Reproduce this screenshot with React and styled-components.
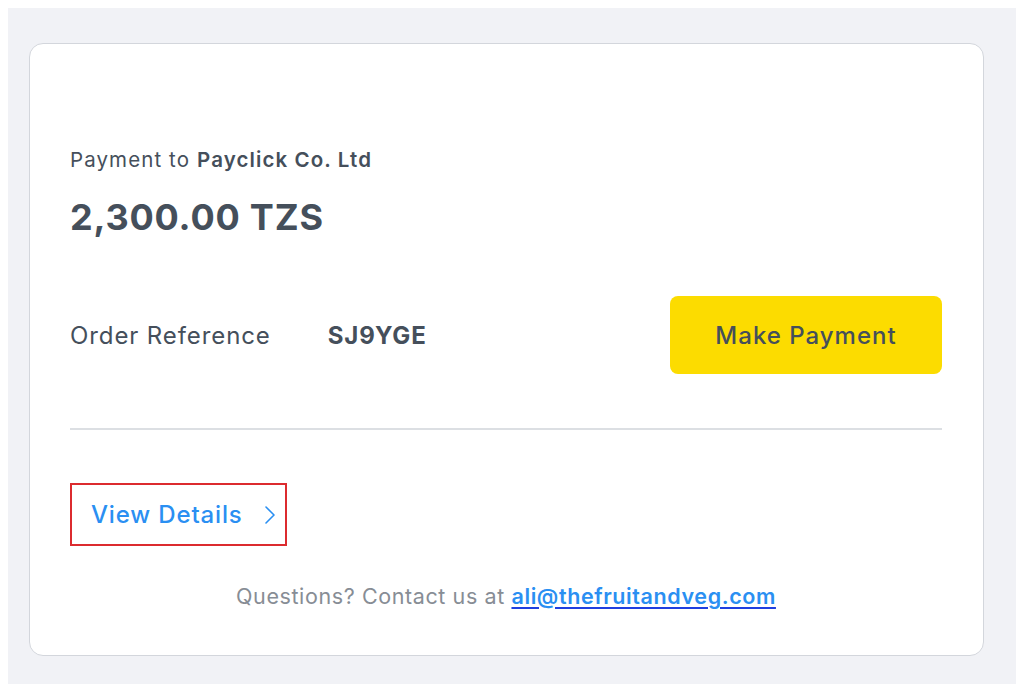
import React from "react";
import styled, { createGlobalStyle } from "styled-components";

const Global = createGlobalStyle`
  html, body { margin: 0; padding: 0; background: #ffffff; }
  body { margin: 8px; font-family: Inter, "Noto Sans", sans-serif; }
  * { box-sizing: border-box; }
`;

const Backdrop = styled.div`
  width: 1008px;
  height: 676px;
  background: #f1f2f6;
  padding: 35px 32px 28px 21px;
  display: flex;
`;

const Card = styled.div`
  flex: 1;
  background: #ffffff;
  border: 1px solid #d3d6dc;
  border-radius: 14px;
  padding: 104px 41px 0 40px;
  display: flex;
  flex-direction: column;
  color: #454f5b;
`;

const PayeeLine = styled.div`
  font-size: 20.5px;
  line-height: 24px;
  font-weight: 400;
  letter-spacing: 1.1px;
  b { font-weight: 600; }
`;

const Amount = styled.div`
  margin-top: 23px;
  font-size: 36px;
  line-height: 44px;
  font-weight: 700;
  letter-spacing: 0.8px;
`;

const Row = styled.div`
  margin-top: 57px;
  display: flex;
  align-items: center;
  justify-content: space-between;
`;

const RefGroup = styled.div`
  display: flex;
  align-items: center;
  gap: 57px;
  font-size: 24px;
  letter-spacing: 0.9px;
`;

const RefLabel = styled.span`
  font-weight: 400;
`;

const RefValue = styled.span`
  font-weight: 700;
`;

const PayButton = styled.button`
  width: 272px;
  height: 78px;
  border: none;
  border-radius: 8px;
  background: #fcdc00;
  color: #454f5b;
  font-family: inherit;
  font-size: 24px;
  font-weight: 500;
  letter-spacing: 1px;
  cursor: pointer;
`;

const Divider = styled.hr`
  margin: 54px 0 0;
  border: none;
  height: 2px;
  background: #dcdfe3;
`;

const DetailsLink = styled.a`
  margin-top: 53px;
  align-self: flex-start;
  width: 217px;
  height: 63px;
  border: 2px solid #dc2b2f;
  display: flex;
  align-items: center;
  padding-left: 19px;
  gap: 21px;
  color: #2a8ff2;
  font-size: 24px;
  font-weight: 500;
  letter-spacing: 0.85px;
  text-decoration: none;
`;

const Footer = styled.p`
  margin: 37px 0 0;
  text-align: center;
  font-size: 21.5px;
  line-height: 26px;
  color: #878d95;
  letter-spacing: 0.6px;
`;

const Email = styled.a`
  color: #2a8ff2;
  font-weight: 600;
  text-decoration: underline;
  text-decoration-color: #1f3fe0;
  text-underline-offset: 3px;
`;

const Chevron = () => (
  <svg width="12" height="20" viewBox="0 0 12 20" fill="none">
    <path d="M2 2 L10 10 L2 18" stroke="#2a8ff2" strokeWidth="1.6" strokeLinecap="round" strokeLinejoin="round" />
  </svg>
);

export default function App() {
  return (
    <>
      <Global />
      <Backdrop>
        <Card>
          <PayeeLine>
            Payment to <b>Payclick Co. Ltd</b>
          </PayeeLine>
          <Amount>2,300.00 TZS</Amount>
          <Row>
            <RefGroup>
              <RefLabel>Order Reference</RefLabel>
              <RefValue>SJ9YGE</RefValue>
            </RefGroup>
            <PayButton>Make Payment</PayButton>
          </Row>
          <Divider />
          <DetailsLink href="#">
            View Details
            <Chevron />
          </DetailsLink>
          <Footer>
            Questions? Contact us at <Email href="#">ali@thefruitandveg.com</Email>
          </Footer>
        </Card>
      </Backdrop>
    </>
  );
}
